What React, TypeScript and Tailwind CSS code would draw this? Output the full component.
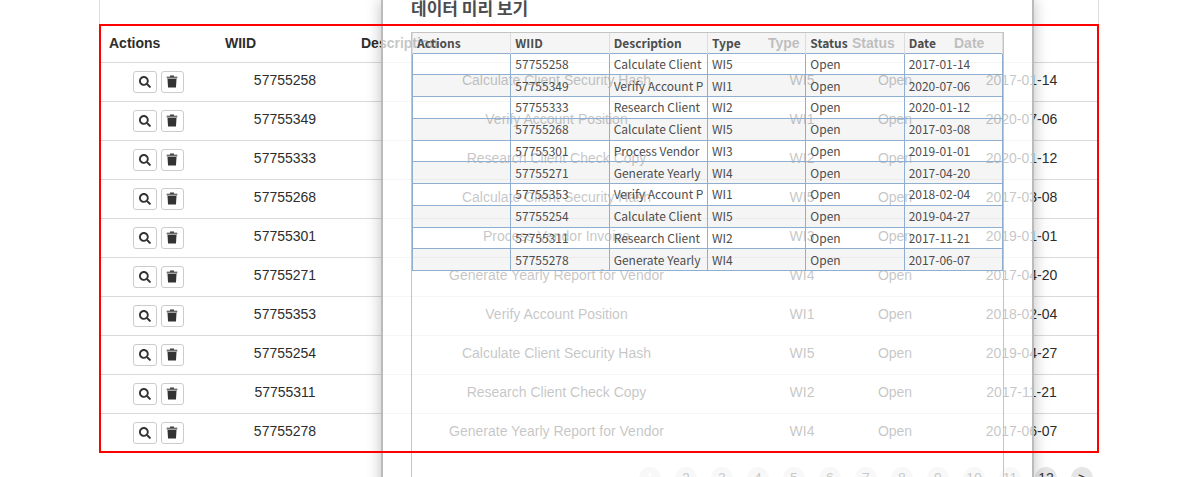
import React from "react";
import { FaSearch } from "react-icons/fa";

type Item = {
  id: string;
  description: string;
  type: string;
  status: string;
  date: string;
};

const items: Item[] = [
  { id: "57755258", description: "Calculate Client Security Hash", type: "WI5", status: "Open", date: "2017-01-14" },
  { id: "57755349", description: "Verify Account Position", type: "WI1", status: "Open", date: "2020-07-06" },
  { id: "57755333", description: "Research Client Check Copy", type: "WI2", status: "Open", date: "2020-01-12" },
  { id: "57755268", description: "Calculate Client Security Hash", type: "WI5", status: "Open", date: "2017-03-08" },
  { id: "57755301", description: "Process Vendor Invoice", type: "WI3", status: "Open", date: "2019-01-01" },
  { id: "57755271", description: "Generate Yearly Report for Vendor", type: "WI4", status: "Open", date: "2017-04-20" },
  { id: "57755353", description: "Verify Account Position", type: "WI1", status: "Open", date: "2018-02-04" },
  { id: "57755254", description: "Calculate Client Security Hash", type: "WI5", status: "Open", date: "2019-04-27" },
  { id: "57755311", description: "Research Client Check Copy", type: "WI2", status: "Open", date: "2017-11-21" },
  { id: "57755278", description: "Generate Yearly Report for Vendor", type: "WI4", status: "Open", date: "2017-06-07" },
];

const headings = ["Actions", "WIID", "Description", "Type", "Status", "Date"];
const pages = ["1", "2", "3", "4", "5", "6", "7", "8", "9", "10", "11", "12", ">"];

function TrashIcon() {
  return (
    <svg viewBox="0 0 12 13" className="h-[13px] w-3" aria-hidden="true">
      <path d="M4 0.5h4v1.5H4z" fill="#333" />
      <path d="M0.7 1.6h10.6v2H0.7z" fill="#6b6b6b" />
      <path d="M1.5 4h9l-0.5 8.5h-8z" fill="#333" />
    </svg>
  );
}

function WorkItems() {
  return (
    <table className="w-full table-fixed text-sm text-[#2d2d2d]">
      <colgroup>
        <col className="w-[116px]" />
        <col className="w-[136px]" />
        <col className="w-[407px]" />
        <col className="w-[84px]" />
        <col className="w-[102px]" />
        <col className="w-[151px]" />
      </colgroup>
      <thead>
        <tr className="h-9">
          {headings.map((h) => (
            <th key={h} className="p-0 pb-0.5 pl-2 text-left font-bold">
              {h}
            </th>
          ))}
        </tr>
      </thead>
      <tbody>
        {items.map((item) => (
          <tr key={item.id} className="h-[39px] border-t border-[#d9d9d9] text-center">
            <td className="p-0 pr-0.5">
              <div className="flex justify-center gap-1">
                <button
                  type="button"
                  aria-label={`View ${item.id}`}
                  className="flex h-[22px] w-6 items-center justify-center rounded-[3px] border border-[#ccc] bg-white text-[#333]"
                >
                  <FaSearch className="size-3" />
                </button>
                <button
                  type="button"
                  aria-label={`Delete ${item.id}`}
                  className="flex h-[22px] w-[23px] items-center justify-center rounded-[3px] border border-[#ccc] bg-white"
                >
                  <TrashIcon />
                </button>
              </div>
            </td>
            <td className="p-0 pb-1">{item.id}</td>
            <td className="p-0 pb-1">{item.description}</td>
            <td className="p-0 pb-1">{item.type}</td>
            <td className="p-0 pb-1">{item.status}</td>
            <td className="p-0 pb-1">{item.date}</td>
          </tr>
        ))}
      </tbody>
    </table>
  );
}

function Cell({ children }: { children?: React.ReactNode }) {
  return (
    <td className="border border-[#8fafd0] px-1 py-0">
      <div className="overflow-hidden whitespace-nowrap">{children}</div>
    </td>
  );
}

function PreviewDialog() {
  return (
    <div
      role="dialog"
      aria-labelledby="preview-title"
      className="absolute top-0 -bottom-4 left-[381px] z-10 flex w-[653px] flex-col border-x-2 border-[#bbb] bg-white/73 px-7 font-['Noto_Sans_CJK_KR',sans-serif] text-[#4d4d4d] shadow-[0_0_14px_rgba(0,0,0,0.25)]"
    >
      <h2 id="preview-title" className="h-8 text-[17px] leading-4 font-bold">
        데이터 미리 보기
      </h2>
      <div className="flex-1 border border-[#c4c4c4]">
        <table className="h-[238px] w-full table-fixed border-collapse text-xs leading-4">
          <thead>
            <tr className="h-5 bg-black/4">
              {headings.map((h) => (
                <th key={h} className="border-x border-[#ddd] px-1 py-0 text-left font-bold">
                  {h}
                </th>
              ))}
            </tr>
          </thead>
          <tbody>
            {items.map((item) => (
              <tr key={item.id} className="even:bg-black/4">
                <Cell />
                <Cell>{item.id}</Cell>
                <Cell>{item.description}</Cell>
                <Cell>{item.type}</Cell>
                <Cell>{item.status}</Cell>
                <Cell>{item.date}</Cell>
              </tr>
            ))}
          </tbody>
        </table>
      </div>
    </div>
  );
}

export default function App() {
  return (
    <div className="relative h-screen overflow-hidden bg-white font-['Liberation_Sans',sans-serif]">
      <main className="mx-auto w-full max-w-[1000px]">
        <div className="h-6 border-x border-[#ddd]" />
        <section className="relative p-0.5 pb-px after:pointer-events-none after:absolute after:inset-0 after:z-20 after:border-2 after:border-[#f00]">
          <WorkItems />
        </section>
        <nav aria-label="Pages" className="mt-3.5 flex justify-end gap-3.5 pr-1.5">
          {pages.map((p) => (
            <button
              key={p}
              type="button"
              className="size-[22px] rounded-full bg-[#e6e6e6] text-sm leading-[22px] text-[#333] first:text-white"
            >
              {p}
            </button>
          ))}
        </nav>
      </main>
      <PreviewDialog />
    </div>
  );
}
